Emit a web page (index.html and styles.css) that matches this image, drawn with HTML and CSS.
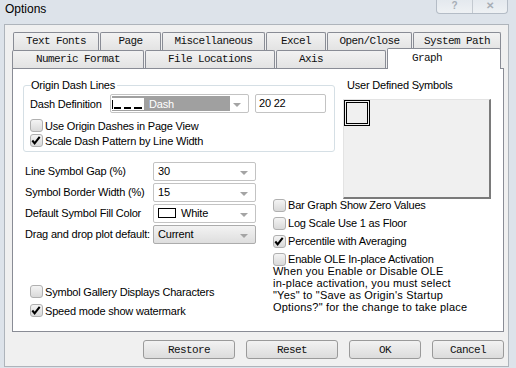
FILE: index.html
```html
<!DOCTYPE html>
<html lang="en">

<head>
    <meta charset="UTF-8">
    <title>Options</title>
    <link rel="stylesheet" href="styles.css">
</head>

<body>
    <div class="window">
        <div class="titlebar">
            <span class="title">Options</span>
            <div class="caption">
                <span class="cap-btn">?</span>
                <span class="cap-btn">&#x2715;</span>
            </div>
        </div>

        <div class="client">
            <div class="tabs">
                <div class="tab-row row1">
                    <div class="tab">Text Fonts</div>
                    <div class="tab">Page</div>
                    <div class="tab">Miscellaneous</div>
                    <div class="tab">Excel</div>
                    <div class="tab">Open/Close</div>
                    <div class="tab">System Path</div>
                </div>
                <div class="tab-row row2">
                    <div class="tab">Numeric Format</div>
                    <div class="tab">File Locations</div>
                    <div class="tab axis">Axis</div>
                    <div class="tab active">Graph</div>
                </div>
            </div>

            <div class="panel">
                <fieldset class="group">
                    <legend>Origin Dash Lines</legend>
                    <div class="dash-row">
                        <span class="label">Dash Definition</span>
                        <div class="combo dash-combo">
                            <span class="sel">
                                <svg class="dash-swatch" width="32" height="12" viewBox="0 0 32 12">
                                    <rect x="0" y="0" width="32" height="12" fill="#fff" />
                                    <rect x="0" y="2" width="1" height="9" fill="#000" />
                                    <rect x="2" y="9" width="7" height="2" fill="#000" />
                                    <rect x="12" y="9" width="7" height="2" fill="#000" />
                                    <rect x="22" y="9" width="8" height="2" fill="#000" />
                                </svg>
                                Dash
                            </span>
                            <span class="arrow"></span>
                        </div>
                        <div class="textbox">20 22</div>
                    </div>
                    <div class="check"><span class="box"></span>Use Origin Dashes in Page View</div>
                    <div class="check"><span class="box on"><svg width="13" height="13" viewBox="0 0 13 13"><path d="M2.5 6.5 L5 9.5 L10.5 2.5" fill="none" stroke="#000" stroke-width="2.2" /></svg></span>Scale Dash Pattern by Line Width</div>
                </fieldset>

                <div class="symbols">
                    <div class="sym-label">User Defined Symbols</div>
                    <div class="sym-box">
                        <div class="sym-cell"></div>
                    </div>
                </div>

                <div class="combos">
                    <div class="combo-row">
                        <span class="label">Line Symbol Gap (%)</span>
                        <div class="combo">30<span class="arrow"></span></div>
                    </div>
                    <div class="combo-row">
                        <span class="label">Symbol Border Width (%)</span>
                        <div class="combo">15<span class="arrow"></span></div>
                    </div>
                    <div class="combo-row">
                        <span class="label">Default Symbol Fill Color</span>
                        <div class="combo"><span class="swatch"></span>White<span class="arrow"></span></div>
                    </div>
                    <div class="combo-row">
                        <span class="label">Drag and drop plot default:</span>
                        <div class="combo list">Current<span class="arrow"></span></div>
                    </div>
                </div>

                <div class="options">
                    <div class="check"><span class="box"></span>Bar Graph Show Zero Values</div>
                    <div class="check"><span class="box"></span>Log Scale Use 1 as Floor</div>
                    <div class="check"><span class="box on"><svg width="13" height="13" viewBox="0 0 13 13"><path d="M2.5 6.5 L5 9.5 L10.5 2.5" fill="none" stroke="#000" stroke-width="2.2" /></svg></span>Percentile with Averaging</div>
                    <div class="check"><span class="box"></span>Enable OLE In-place Activation</div>
                    <p class="note">When you Enable or Disable OLE<br>in-place activation, you must select<br>"Yes" to "Save as Origin's Startup<br>Options?" for the change to take place</p>
                </div>

                <div class="bottom-checks">
                    <div class="check"><span class="box"></span>Symbol Gallery Displays Characters</div>
                    <div class="check"><span class="box on"><svg width="13" height="13" viewBox="0 0 13 13"><path d="M2.5 6.5 L5 9.5 L10.5 2.5" fill="none" stroke="#000" stroke-width="2.2" /></svg></span>Speed mode show watermark</div>
                </div>
            </div>

            <div class="buttons">
                <button class="btn wide">Restore</button>
                <button class="btn wide">Reset</button>
                <button class="btn">OK</button>
                <button class="btn">Cancel</button>
            </div>
        </div>
    </div>
</body>

</html>
```

FILE: styles.css
```css
* {
    padding: 0;
    margin: 0;
    box-sizing: border-box;
}

body {
    background-color: #dde3ea;
    font-family: "Liberation Sans", Arial, sans-serif;
    font-size: 11px;
    letter-spacing: -0.2px;
    color: #000;
}

.window {
    width: 516px;
    height: 368px;
    background-color: #dde3ea;
}

/* title bar */
.titlebar {
    height: 24px;
    display: flex;
    justify-content: space-between;
    align-items: flex-start;
    padding-left: 5px;
}

.title {
    font-size: 12px;
    letter-spacing: 0;
    line-height: 18px;
    color: #000;
}

.caption {
    display: flex;
    margin-right: 8px;
    border: 1px solid #b4bcc6;
    border-top: 0;
    border-radius: 0 0 4px 4px;
    background: linear-gradient(to bottom, #e4e9ee, #eef1f4);
}

.cap-btn {
    width: 35px;
    height: 13px;
    font-size: 10px;
    line-height: 12px;
    text-align: center;
    color: #a7aeb6;
    font-weight: bold;
}

.cap-btn + .cap-btn {
    border-left: 1px solid #c3c9d0;
}

/* client area */
.client {
    margin: 0 7px 0 4px;
    height: 343px;
    border: 1px solid #aeb4bb;
    background-color: #f0f0f0;
}

.tabs {
    padding: 7px 0 0 8px;
    font-family: "Liberation Mono", monospace;
    font-size: 11px;
    letter-spacing: -0.6px;
    color: #111;
}

.tab-row {
    display: grid;
    gap: 1px;
}

.row1 {
    height: 18px;
    grid-template-columns: 86px 61px 103px 60px 85px 88px;
}

.row2 {
    height: 18px;
    grid-template-columns: 132px 130px 110px 114px;
    grid-template-rows: 18px;
    align-items: end;
    position: relative;
    margin-left: -1px;
}

.tab {
    height: 18px;
    border: 1px solid #898c95;
    border-bottom: 0;
    border-radius: 2px 2px 0 0;
    background: linear-gradient(to bottom, #f2f2f2, #e3e3e3);
    text-align: center;
    line-height: 17px;
}

.row2 .tab.axis {
    padding-right: 40px;
}

.row2 .tab.active {
    height: 21px;
    margin-bottom: -1px;
    padding-right: 34px;
    background: #fff;
    line-height: 18px;
    position: relative;
    z-index: 1;
}

/* page panel */
.panel {
    margin: 0 4px 0 7px;
    height: 264px;
    background-color: #fff;
    border: 1px solid #898c95;
    padding: 10px 12px 0 10px;
    display: grid;
    grid-template-columns: 250px 62px 8px 148px;
    grid-template-rows: 79px 38px 50px 1fr;
}

.label {
    white-space: nowrap;
}

.group {
    grid-column: 1 / 3;
    grid-row: 1;
    align-self: start;
    height: 73px;
    border: 1px solid #d5dfe5;
    border-radius: 3px;
    padding: 3px 6px 0 6px;
}

.group legend {
    margin-left: 1px;
    padding: 0 2px 0 0;
    line-height: 12px;
}

.dash-row {
    display: flex;
    align-items: center;
    height: 19px;
    margin-bottom: 5px;
}

.dash-row .label {
    width: 80px;
}

.combo {
    position: relative;
    height: 19px;
    width: 103px;
    border: 1px solid #c3c3c3;
    border-radius: 2px;
    background-color: #fff;
    display: flex;
    align-items: center;
    padding-left: 4px;
}

.dash-combo {
    width: 139px;
    padding-left: 1px;
}

.dash-combo .sel {
    display: flex;
    align-items: center;
    width: 118px;
    height: 15px;
    background-color: #a0a0a0;
    color: #fff;
    gap: 5px;
}

.arrow {
    position: absolute;
    right: 7px;
    top: 8px;
    border-left: 4px solid transparent;
    border-right: 4px solid transparent;
    border-top: 4px solid #a4a4a4;
}

.textbox {
    margin-left: 6px;
    width: 71px;
    height: 19px;
    border: 1px solid #c3c3c3;
    border-radius: 2px;
    padding-left: 3px;
    line-height: 17px;
}

.check {
    display: flex;
    align-items: center;
    height: 15px;
    gap: 2px;
    white-space: nowrap;
}

.box {
    flex: none;
    width: 13px;
    height: 13px;
    border: 1px solid #b0b0b0;
    border-radius: 3px;
    background: linear-gradient(to bottom, #f4f4f4, #d9d9d9);
    display: flex;
}

.box svg {
    margin: -1px 0 0 -1px;
}

/* user defined symbols */
.symbols {
    grid-column: 4;
    grid-row: 1 / 3;
}

.sym-label {
    padding-left: 4px;
    line-height: 12px;
    margin-bottom: 8px;
}

.sym-box {
    height: 100px;
    border: 1px solid #e3e3e3;
    border-right: 2px solid #7a7a7a;
    border-bottom: 2px solid #7a7a7a;
    background-color: #f0f0f0;
}

.sym-cell {
    width: 26px;
    height: 26px;
    border: 3px double #000;
}

/* combos */
.combos {
    grid-column: 1;
    grid-row: 2 / 4;
    padding: 3px 0 0 2px;
    display: flex;
    flex-direction: column;
    gap: 1px;
}

.combo-row {
    display: flex;
    align-items: center;
    height: 20px;
}

.combo-row .label {
    width: 128px;
}

.swatch {
    width: 18px;
    height: 10px;
    border: 1px solid #000;
    background: #fff;
    margin-right: 5px;
}

.combo.list {
    background: linear-gradient(to bottom, #f3f3f3, #dedede);
    border-color: #acacac;
}

/* right options */
.options {
    grid-column: 2 / 5;
    grid-row: 3 / 5;
}

.options .check {
    height: 18px;
}

.note {
    margin-top: -3px;
    line-height: 12px;
    letter-spacing: 0.2px;
}

/* bottom checks */
.bottom-checks {
    grid-column: 1;
    grid-row: 4;
    padding: 36px 0 0 7px;
}

.bottom-checks .check {
    height: 19px;
}

/* buttons */
.buttons {
    display: flex;
    justify-content: flex-end;
    gap: 11px;
    padding: 8px 4px 0 0;
}

.btn {
    width: 72px;
    height: 19px;
    border: 1px solid #9a9a9a;
    border-radius: 3px;
    background: linear-gradient(to bottom, #f2f2f2, #dcdcdc);
    font-family: "Liberation Mono", monospace;
    font-size: 11px;
    letter-spacing: -0.6px;
    color: #111;
}

.btn.wide {
    width: 92px;
}
```
